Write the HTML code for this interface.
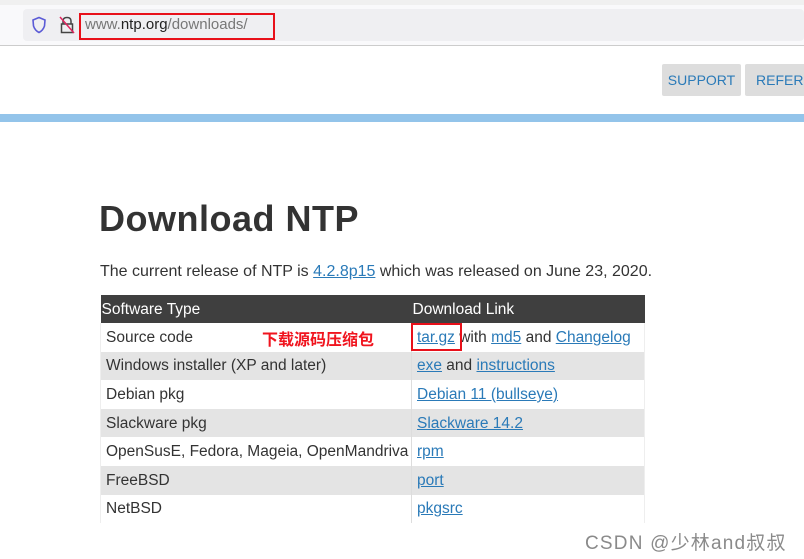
<!DOCTYPE html>
<html><head><meta charset="utf-8"><style>
*{margin:0;padding:0;box-sizing:border-box}
body{width:804px;height:559px;overflow:hidden;background:#fff;font-family:"Liberation Sans","Noto Sans CJK SC",sans-serif;position:relative;color:#333}
.abs{position:absolute}
a{color:#2a7ab8;text-decoration:underline}
table{border-collapse:collapse;position:absolute;left:100px;top:295px;width:545px;font-size:15.5px}
td,th{height:28.6px;padding:1px 0 0 5px;text-align:left;white-space:nowrap;font-weight:normal}
th{background:#3f3f3f;color:#fff;padding-left:1px;height:28px}
td:first-child{width:311px;border-right:1px solid #ddd}
tr:nth-child(odd) td{background:#e4e4e4}
td{border-left:1px solid #eee;border-right:1px solid #eee;color:#333}
</style></head><body>
<div class="abs" style="left:0;top:0;width:804px;height:5px;background:#f0f0f0"></div>
<div class="abs" style="left:0;top:5px;width:804px;height:40px;background:#f9f9fb"></div>
<div class="abs" style="left:23px;top:9px;width:781px;height:32px;background:#efeff2;border-radius:4px"></div>
<div class="abs" style="left:0;top:45px;width:804px;height:1px;background:#ccc"></div>
<svg class="abs" style="left:31px;top:16px" width="16" height="18" viewBox="0 0 16 18"><path d="M8 1.5 L14 4 L13.5 10 Q12 14.5 8 16.5 Q4 14.5 2.5 10 L2 4 Z" fill="none" stroke="#5b5bd6" stroke-width="1.6"/></svg>
<svg class="abs" style="left:58px;top:15px" width="18" height="20" viewBox="0 0 18 20"><path d="M5 9 V6 Q5 2.5 9 2.5 Q13 2.5 13 6 V9 M3.5 9 H14.5 V17.5 H3.5 Z" fill="none" stroke="#444" stroke-width="1.5"/><path d="M2 2 L16 18" stroke="#e0245e" stroke-width="1.5"/></svg>
<div class="abs" style="left:79px;top:13px;width:196px;height:27px;border:2px solid #e8101a"></div>
<div class="abs" style="left:85px;top:16px;font-size:15px;color:#777">www.<span style="color:#222">ntp.org</span>/downloads/</div>
<div class="abs" style="left:662px;top:64px;width:79px;height:32px;background:#ddd;border-radius:2px;color:#2a7ab8;font-size:14px;line-height:32px;text-align:center">SUPPORT</div>
<div class="abs" style="left:745px;top:64px;width:79px;height:32px;background:#ddd;border-radius:2px;color:#2a7ab8;font-size:14px;line-height:32px;padding-left:11px">REFERENCE</div>
<div class="abs" style="left:0;top:114px;width:804px;height:8px;background:#93c4ea"></div>
<div class="abs" style="left:99px;top:198px;font-size:36px;font-weight:bold;color:#333;letter-spacing:0.5px">Download NTP</div>
<div class="abs" style="left:100px;top:263px;font-size:16px;color:#333">The current release of NTP is <a>4.2.8p15</a> which was released on June 23, 2020.</div>
<table>
<tr><th>Software Type</th><th>Download Link</th></tr>
<tr><td>Source code</td><td><a>tar.gz</a> with <a>md5</a> and <a>Changelog</a></td></tr>
<tr><td>Windows installer (XP and later)</td><td><a>exe</a> and <a>instructions</a></td></tr>
<tr><td>Debian pkg</td><td><a>Debian 11 (bullseye)</a></td></tr>
<tr><td>Slackware pkg</td><td><a>Slackware 14.2</a></td></tr>
<tr><td>OpenSusE, Fedora, Mageia, OpenMandriva</td><td><a>rpm</a></td></tr>
<tr><td>FreeBSD</td><td><a>port</a></td></tr>
<tr><td>NetBSD</td><td><a>pkgsrc</a></td></tr>
</table>
<div class="abs" style="left:262px;top:326px;font-size:16px;font-weight:bold;color:#f0141e">下载源码压缩包</div>
<div class="abs" style="left:411px;top:323px;width:51px;height:28px;border:2px solid #e8101a"></div>
<div class="abs" style="left:585px;top:528px;font-size:19px;color:#8a8a8a;letter-spacing:1.2px">CSDN @少林and叔叔</div>
</body></html>
